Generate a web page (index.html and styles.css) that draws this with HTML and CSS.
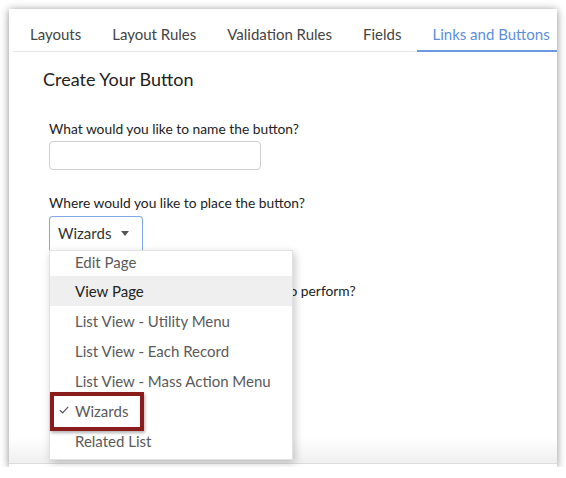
FILE: index.html
```html
<!DOCTYPE html>
<html>
<head>
<meta charset="utf-8">
<link rel="stylesheet" href="styles.css">
</head>
<body>
<div class="window">
  <div class="tabs">
    <div class="tab">Layouts</div>
    <div class="tab">Layout Rules</div>
    <div class="tab">Validation Rules</div>
    <div class="tab">Fields</div>
    <div class="tab active">Links and Buttons</div>
  </div>
  <div class="content">
    <h1 class="title">Create Your Button</h1>
    <div class="field">
      <div class="label">What would you like to name the button?</div>
      <div class="input"></div>
    </div>
    <div class="field">
      <div class="label">Where would you like to place the button?</div>
      <div class="select">Wizards <span class="caret"></span></div>
    </div>
    <div class="field action">
      <div class="label">What action would you like the button to perform?</div>
    </div>
  </div>
  <div class="footer"></div>
  <div class="menu">
    <div class="item first">Edit Page</div>
    <div class="item hover">View Page</div>
    <div class="item">List View - Utility Menu</div>
    <div class="item">List View - Each Record</div>
    <div class="item">List View - Mass Action Menu</div>
    <div class="item selected"><span class="check"><svg width="10" height="8" viewBox="0 0 10 8"><path d="M0.8 4.2 L3.6 6.8 L9.2 0.8" fill="none" stroke="#555" stroke-width="1.2"/></svg></span>Wizards</div>
    <div class="item">Related List</div>
  </div>
  <div class="highlight-box"></div>
</div>
</body>
</html>
```

FILE: styles.css
```css
* { box-sizing: border-box; }
html, body { margin: 0; padding: 0; background: #fff; }
body { font-family: Lato, "Open Sans", sans-serif; }

.window {
  position: relative;
  margin: 9px 0 0 9px;
  width: 548px;
  height: 458px;
  background: #fff;
  box-shadow: 0 1px 8px rgba(0,0,0,0.45);
  overflow: hidden;
  display: flex;
  flex-direction: column;
}

.tabs {
  display: flex;
  margin-left: 4px;
  height: 43px;
  border-bottom: 1px solid #e6e6e6;
  flex-shrink: 0;
}
.tab {
  padding: 15px 16px 0 17px;
  font-size: 15px;
  color: #444;
  white-space: nowrap;
  line-height: 20px;
}
.tab + .tab { padding-left: 15px; }
.tab.active {
  color: #5b8fdc;
  border-bottom: 2px solid #6b9ae0;
  margin-bottom: -1px;
}

.content {
  padding: 0 0 0 34px;
  flex: 1;
}
.title {
  margin: 16px 0 0 0;
  font-size: 18px;
  font-weight: normal;
  color: #222;
  line-height: 22px;
}
.field {
  padding-left: 6px;
}
.field:nth-of-type(1) { margin-top: 30px; }
.field + .field { margin-top: 24px; }
.field.action { margin-top: 30px; }
.label {
  font-size: 13.8px;
  color: #222;
  line-height: 18px;
}
.input {
  margin-top: 3px;
  width: 212px;
  height: 29px;
  border: 1px solid #cfcfcf;
  border-radius: 4px;
}
.select {
  margin-top: 4px;
  width: 94px;
  height: 36px;
  border: 1px solid #7ea8e8;
  border-bottom: none;
  border-radius: 4px 4px 0 0;
  font-size: 15px;
  color: #333;
  padding: 0 0 3px 8px;
  line-height: 20px;
  display: flex;
  align-items: center;
}
.caret {
  display: inline-block;
  width: 0; height: 0;
  margin-left: 10px;
  margin-top: 1px;
  border-left: 4px solid transparent;
  border-right: 4px solid transparent;
  border-top: 5px solid #555;
}

.footer {
  height: 26px;
  flex-shrink: 0;
  background: linear-gradient(#fff, #efefef);
  border-bottom: 1px solid #dcdcdc;
  margin-bottom: 3px;
}

.menu {
  position: absolute;
  left: 40px;
  top: 241px;
  width: 244px;
  height: 210px;
  background: #fff;
  border: 1px solid #e2e2e2;
  box-shadow: 2px 3px 8px rgba(0,0,0,0.22);
  overflow: hidden;
}
.item {
  height: 30px;
  line-height: 30px;
  padding-left: 25px;
  font-size: 15px;
  color: #5a5a5a;
  white-space: nowrap;
  position: relative;
}
.item.first { height: 25px; line-height: 22px; }
.item.hover { background: #efefef; color: #222; }
.check {
  position: absolute;
  left: 9px;
  top: 10px;
  line-height: 0;
}
.highlight-box {
  position: absolute;
  left: 41px;
  top: 383px;
  width: 94px;
  height: 39px;
  border: 4px solid #8b1c1c;
  box-shadow: 1px 2px 3px rgba(0,0,0,0.3);
}
```
